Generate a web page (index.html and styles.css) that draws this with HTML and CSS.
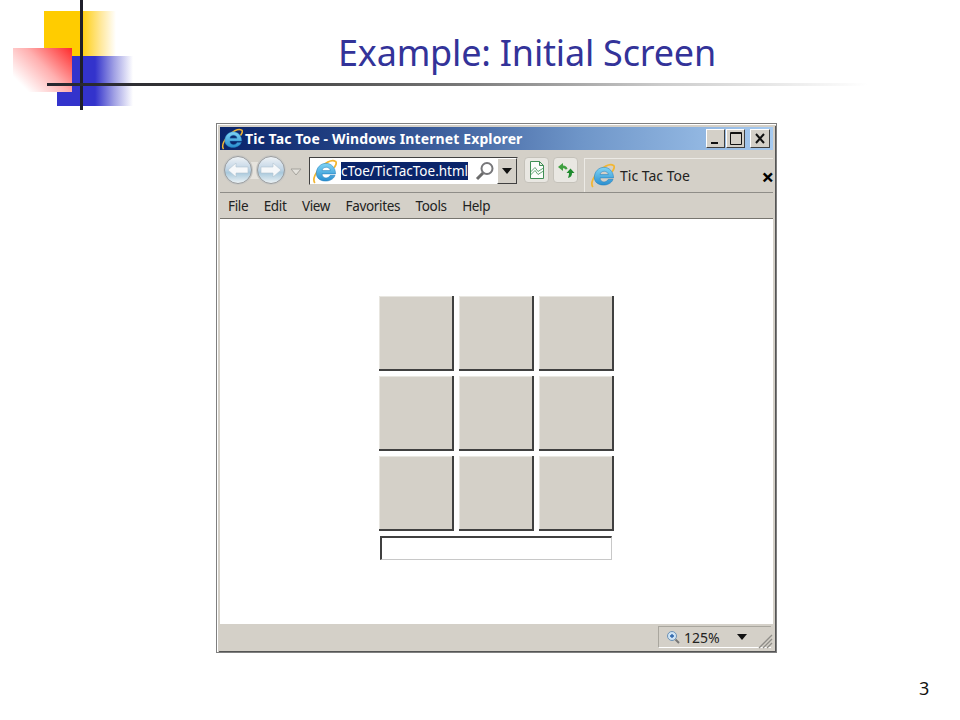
FILE: index.html
```html
<!DOCTYPE html>
<html lang="en">
<head>
<meta charset="utf-8">
<title>Example: Initial Screen</title>
<link rel="stylesheet" href="styles.css">
</head>
<body>
<svg width="0" height="0" class="defs">
  <defs>
    <linearGradient id="ieBlue" x1="0" y1="0" x2="0" y2="1">
      <stop offset="0" stop-color="#7fd4f4"/><stop offset="1" stop-color="#2a8fd0"/>
    </linearGradient>
    <linearGradient id="navFace" x1="0" y1="0" x2="0" y2="1">
      <stop offset="0" stop-color="#f0f3f6"/><stop offset=".45" stop-color="#c3d6e6"/><stop offset=".6" stop-color="#a9c9dc"/><stop offset="1" stop-color="#eef3f5"/>
    </linearGradient>
    <symbol id="ie" viewBox="0 0 26 26">
      <path d="M3 25C0 21 4 13 10 8 15 3.500 21 0.500 24.500 2.500 26 4 24.500 7 23 9" fill="none" stroke="#f2b632" stroke-width="1.800"/>
      <path d="M4.500 15C4.500 9 9 4.500 14.500 4.500S24.500 9 24.500 15.500H10.500C10.500 20.500 17 21 19 17H24C21 25.500 4.500 25 4.500 15ZM10.500 12H19C18.500 7.500 11 7.500 10.500 12Z" fill="url(#ieBlue)" fill-rule="evenodd" stroke="#1b78b8" stroke-width=".5"/>
    </symbol>
  </defs>
</svg>

<div class="deco" aria-hidden="true">
  <div class="deco-yellow"></div>
  <div class="deco-blue"></div>
  <div class="deco-red"></div>
  <div class="deco-vline"></div>
  <div class="deco-hline"></div>
</div>

<header class="slide-head">
  <h1 class="slide-title">Example: Initial Screen</h1>
</header>

<main class="window">
  <div class="titlebar">
    <svg class="title-icon"><use href="#ie"/></svg>
    <span class="title-text">Tic Tac Toe - Windows Internet Explorer</span>
    <div class="win-btns">
      <span class="win-btn"><svg width="18" height="17" viewBox="0 0 18 17"><rect x="4" y="12" width="7" height="2" fill="#111"/></svg></span>
      <span class="win-btn"><svg width="18" height="17" viewBox="0 0 18 17"><path d="M3.500 2.500H14.500V14.500H3.500Z M3.500 3.500H14.500" fill="none" stroke="#111"/></svg></span>
      <span class="win-btn win-close"><svg width="18" height="17" viewBox="0 0 18 17"><path d="M5 4L13 13M13 4L5 13" fill="none" stroke="#111" stroke-width="2"/></svg></span>
    </div>
  </div>

  <div class="toolbar">
    <div class="nav">
      <svg width="66" height="34" viewBox="0 0 66 34">
        <rect x="16" y="8" width="32" height="17" fill="#e6e3dd"/>
        <circle cx="17" cy="16" r="15" fill="#c9c8c4"/>
        <circle cx="50" cy="16" r="15" fill="#c9c8c4"/>
        <circle cx="17" cy="16" r="13.500" fill="url(#navFace)" stroke="#9a9c9e"/>
        <circle cx="50" cy="16" r="13.500" fill="url(#navFace)" stroke="#9a9c9e"/>
        <path d="M7 16L15 9V13H27V19H15V23Z" fill="#f6f8fa" stroke="#b4c4d0" stroke-width=".6"/>
        <path d="M60 16L52 9V13H40V19H52V23Z" fill="#f6f8fa" stroke="#b4c4d0" stroke-width=".6"/>
      </svg>
      <svg class="nav-drop" width="12" height="8" viewBox="0 0 12 8"><path d="M1 1H11L6 7Z" fill="#e4e2dc" stroke="#a5a39d"/></svg>
    </div>
    <div class="address">
      <svg class="addr-icon"><use href="#ie"/></svg>
      <span class="addr-text">cToe/TicTacToe.html</span>
      <svg class="addr-search" width="22" height="22" viewBox="0 0 22 22"><circle cx="13" cy="8.500" r="5.500" fill="none" stroke="#77777a" stroke-width="2"/><path d="M9 13L3 19" stroke="#6b6b6b" stroke-width="3"/></svg>
      <span class="addr-drop"><i class="caret"></i></span>
    </div>
    <span class="tool-btn tool-first"><svg width="18" height="20" viewBox="0 0 18 20"><path d="M2.500 1.500H11.500L15.500 5.500V18.500H2.500Z M11.500 1.500V5.500H15.500" fill="#fbfdfb" stroke="#3f8f55"/><path d="M2.500 12L7 7.500L10 11.500L15.500 8M2.500 15L7 10.500L10 14.500L15.500 11" fill="none" stroke="#3f8f55" stroke-width=".8"/></svg></span>
    <span class="tool-btn"><svg width="20" height="20" viewBox="0 0 20 20"><path d="M2 7L7 3V5.500C9.500 5.500 11 7 11.500 9L9.500 9.500C9 8.700 8 8.300 7 8.300V11Z" fill="#3f9f3f"/><path d="M12 18C12.500 16.500 13 15 13 13H10.500L14.500 8.500L18.500 13H16C16 15.500 15 17.500 12 18Z" fill="#1e8a2e"/></svg></span>
    <div class="tab">
      <svg class="tab-icon"><use href="#ie"/></svg>
      <span class="tab-text">Tic Tac Toe</span>
      <span class="tab-close">×</span>
    </div>
  </div>

  <nav class="menubar">
    <span>File</span><span>Edit</span><span>View</span><span>Favorites</span><span>Tools</span><span>Help</span>
  </nav>

  <div class="content">
    <div class="board">
      <button class="cell"></button><button class="cell"></button><button class="cell"></button>
      <button class="cell"></button><button class="cell"></button><button class="cell"></button>
      <button class="cell"></button><button class="cell"></button><button class="cell"></button>
    </div>
    <input class="status-input" type="text" aria-label="status">
  </div>

  <footer class="statusbar">
    <div class="zoom">
      <svg width="14" height="14" viewBox="0 0 14 14"><circle cx="6" cy="6" r="4.500" fill="#cfe4f5" stroke="#6d92b5"/><path d="M4 6H8M6 4V8" stroke="#2a62a8" stroke-width="1.300"/><path d="M9.500 9.500L13 13" stroke="#777" stroke-width="2"/></svg>
      <span class="zoom-text">125%</span>
      <i class="caret zoom-caret"></i>
    </div>
    <svg class="grip" width="15" height="15" viewBox="0 0 15 15"><path d="M1 14L14 1M5 14L14 5M9 14L14 9" stroke="#8f8d88" stroke-width="1.300"/></svg>
  </footer>
</main>

<div class="page-no">3</div>
</body>
</html>
```

FILE: styles.css
```css
* { box-sizing: border-box; }
html, body { margin: 0; padding: 0; }
body {
  width: 960px;
  height: 720px;
  background: #fff;
  position: relative;
  overflow: hidden;
  font-family: "Liberation Sans", Arial, sans-serif;
}
.defs { position: absolute; }

.deco { position: absolute; inset: 0; pointer-events: none; }
.deco-yellow { position: absolute; left: 44px; top: 11px; width: 72px; height: 45px;
  background: linear-gradient(90deg, #ffcc00 0, #ffcc00 50%, #ffe9a0 80%, #fff 100%); }
.deco-blue { position: absolute; left: 57px; top: 56px; width: 76px; height: 50px;
  background: linear-gradient(90deg, #3333cc 0, #3333cc 50%, #a0a0e4 75%, #fff 100%); }
.deco-red { position: absolute; left: 13px; top: 48px; width: 59px; height: 44px;
  background: linear-gradient(45deg, #fff 15%, #ffb0b0 55%, #ff2a2a 100%); }
.deco-vline { position: absolute; left: 80px; top: 0; width: 3px; height: 110px; background: #1f1f2a; }
.deco-hline { position: absolute; left: 47px; top: 83px; width: 820px; height: 3px;
  background: linear-gradient(90deg, #26262e 0, #3a3a3a 25%, #777 50%, #ccc 75%, #fff 100%); }

.slide-head { height: 123px; padding: 30px 0 0 94px; }
.slide-title {
  margin: 0;
  text-align: center;
  font-size: 36px;
  line-height: 46px;
  font-weight: 400;
  color: #333399;
  font-family: "Noto Sans", "Liberation Sans", sans-serif;
  letter-spacing: -0.2px;
}

.window {
  margin-left: 216px;
  width: 561px;
  height: 530px;
  background: #d4d0c8;
  border: 1px solid #7f7f7f;
  box-shadow: inset 1px 1px 0 #fff, inset 2px 2px 0 #d4d0c8, inset -1px -1px 0 #555, inset -3px 0 0 #d4d0c8;
  padding: 3px 3px 2px 3px;
  display: flex;
  flex-direction: column;
  font-family: "Open Sans", "Noto Sans", sans-serif;
}

.titlebar {
  height: 23px;
  flex: none;
  display: flex;
  align-items: center;
  color: #fff;
  background: linear-gradient(90deg, #0a246a 0, #2a4a8c 30%, #6e95c8 65%, #a6caf0 100%);
  padding-right: 3px;
}
.title-icon { width: 22px; height: 22px; margin-left: 1px; flex: none; }
.title-text { margin-left: 2px; font-size: 14px; font-weight: 700; font-family: "Noto Sans", sans-serif; letter-spacing: .12px; white-space: nowrap; }
.win-btns { margin-left: auto; display: flex; gap: 1px; }
.win-btn {
  width: 19px; height: 19px; background: #d4d0c8; display: block;
  border: 1px solid; border-color: #fff #404040 #404040 #fff;
}
.win-close { margin-left: 4px; width: 20px; }
.win-btn svg { display: block; margin: 0; }

.toolbar {
  height: 43px;
  flex: none;
  display: flex;
  align-items: flex-start;
  border-bottom: 1px solid #8f8d88;
  padding: 4px 0 0 1px;
  position: relative;
}
.nav { display: flex; align-items: center; width: 84px; flex: none; }
.nav-drop { margin: 0 0 -1px 3px; }
.address {
  margin: 3px 0 0 4px;
  width: 209px; height: 28px;
  background: #fff;
  border: 1px solid; border-color: #404040 #d4d0c8 #d4d0c8 #404040;
  display: flex; align-items: center;
  flex: none;
}
.addr-icon { width: 25px; height: 25px; margin-left: 2px; flex: none; }
.addr-text {
  margin-left: 4px;
  background: #0a246a; color: #fff; font-size: 13.500px; line-height: 18px;
  width: 127px; overflow: hidden; white-space: nowrap; flex: none;
  font-family: "Noto Sans", sans-serif;
}
.addr-search { margin-left: 6px; flex: none; }
.addr-drop {
  width: 20px; height: 26px; margin-left: auto; background: #d4d0c8;
  border: 1px solid; border-color: #fff #404040 #404040 #fff;
  display: flex; align-items: center; justify-content: center;
}
.caret { display: block; width: 0; height: 0; border-left: 5px solid transparent; border-right: 5px solid transparent; border-top: 6px solid #111; }
.tool-btn {
  width: 25px; height: 26px; margin: 3px 0 0 4px; flex: none;
  background: #e9e7e2; border: 1px solid #c5c2ba; border-radius: 4px;
  display: flex; align-items: center; justify-content: center;
}
.tool-first { margin-left: 6px; }
.tab {
  margin-left: 6px;
  align-self: stretch;
  margin-top: 4px;
  flex: 1;
  display: flex; align-items: center;
  border: 1px solid #eceae5; border-width: 1px 0 0 1px;
  position: relative;
}
.tab-icon { width: 25px; height: 25px; margin-left: 5px; flex: none; }
.tab-text { margin-left: 5px; font-size: 14px; color: #222; font-family: "Noto Sans", sans-serif; }
.tab-close { margin-left: auto; font-size: 22px; font-weight: 700; color: #000; line-height: 1; margin-right: -1px; }

.menubar {
  height: 26px; flex: none;
  display: flex; align-items: center;
  gap: 15.500px;
  padding: 0 0 0 8px;
  font-size: 13.500px;
  color: #222;
  border-bottom: 1px solid #77756f;
  font-family: "Noto Sans", sans-serif;
  letter-spacing: -.35px;
}

.content {
  flex: 1;
  background: #fff;
  display: flex;
  flex-direction: column;
  align-items: flex-start;
  padding: 77px 0 0 159px;
}
.board { display: grid; grid-template-columns: repeat(3, 75px); grid-auto-rows: 75px; gap: 5px; }
.cell {
  padding: 0; margin: 0;
  background: #d4d0c8;
  border: 0;
  border-right: 2px solid #404040;
  border-bottom: 2px solid #404040;
  box-shadow: inset 1px 1px 0 #e8e6e0;
}
.status-input {
  margin: 5px 0 0 1px;
  width: 232px; height: 24px;
  padding: 0;
  background: #fff;
  border: 1px solid #c8c8c8;
  border-top: 2px solid #404040;
  border-left: 2px solid #404040;
  outline: none;
}

.statusbar {
  height: 26px; flex: none;
  position: relative;
  display: flex;
  align-items: center;
  justify-content: flex-end;
  padding-right: 2px;
}
.zoom {
  width: 113px; height: 22px; margin-right: 0;
  display: flex; align-items: center;
  padding-left: 7px;
  border: 1px solid; border-color: #a9a69e #fff #fff #a9a69e;
  border-width: 1px 0 1px 1px;
}
.zoom-text { margin-left: 4px; font-size: 14px; color: #222; font-family: "Noto Sans", sans-serif; }
.zoom-caret { margin-left: 17px; }
.grip { position: absolute; right: 0; bottom: 1px; }

.page-no {
  position: absolute; left: 919px; top: 677px;
  font-size: 18px; line-height: 22px; color: #111;
  font-family: "Noto Sans", sans-serif;
}
```
